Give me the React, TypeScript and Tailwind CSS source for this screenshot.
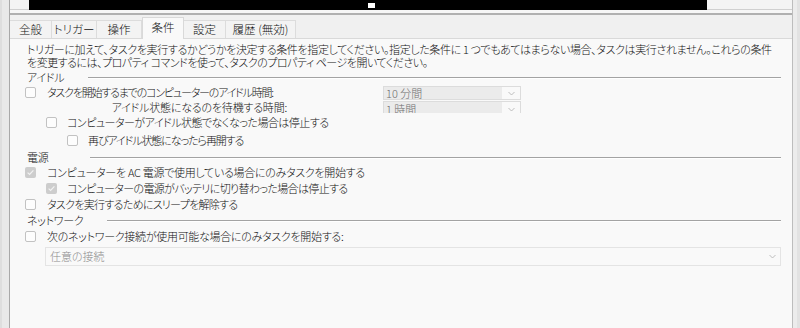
import React from "react";

function Box({ checked }: { checked?: boolean }) {
  if (checked) {
    return (
      <span className="w-[11px] h-[11px] rounded-[2px] bg-[#cdcdcd] flex items-center justify-center shrink-0">
        <svg width="9" height="9" viewBox="0 0 9 9">
          <path d="M1.6 4.6 L3.6 6.5 L7.4 2.4" stroke="#f2f2f2" strokeWidth="1.2" fill="none" />
        </svg>
      </span>
    );
  }
  return <span className="w-[11px] h-[11px] rounded-[2px] border border-[#c2c2c2] bg-[#fdfdfd] shrink-0" />;
}

function Heading({ label, w }: { label: string; w: string }) {
  return (
    <div className="flex items-center h-[16px] pl-[2px]">
      <span className={`${w} shrink-0`}>{label}</span>
      <div className="flex-1 mt-[2px] border-t border-[#a3a3a3] border-b border-b-white" />
    </div>
  );
}

function Chevron() {
  return (
    <svg width="7" height="5" viewBox="0 0 7 5">
      <path d="M0.5 1 L3.5 4 L6.5 1" stroke="#b5b5b5" strokeWidth="0.9" fill="none" />
    </svg>
  );
}

export default function App() {
  const tabs = [
    { t: "全般", w: "w-[42px]" },
    { t: "トリガー", w: "w-[45px]" },
    { t: "操作", w: "w-[45px]" },
    { t: "条件", w: "w-[42px]", sel: true },
    { t: "設定", w: "w-[42px]" },
    { t: "履歴 (無効)", w: "w-[70px]" },
  ];
  return (
    <div className="w-[800px] h-[328px] overflow-hidden bg-[#f0f0f0] flex text-[11px] font-light tracking-[-0.3px] text-[#111] font-['Noto_Sans_CJK_JP',sans-serif] [font-feature-settings:'palt']">
      <div className="w-[10px] shrink-0 bg-[#e9e9e9] border-l-[2px] border-l-[#dedede] border-r border-r-[#a9a9a9]" />
      <div className="flex-1 flex flex-col">
        <div className="h-[10px] flex shrink-0">
          <div className="w-[19px] bg-[#f4f4f4] border-b border-[#d0d0d0]" />
          <div className="flex-1 bg-black flex items-start">
            <div className="ml-[339px] mt-[3px] w-[7px] h-[5px] bg-white" />
          </div>
          <div className="w-[85px] bg-[#f4f4f4] border-b border-[#d0d0d0]" />
        </div>
        <div className="h-[5px] shrink-0 border-b-[2px] border-[#b0b0b0] bg-[#f6f6f6]" />
        <div className="h-[23px] shrink-0 flex items-end text-[11.5px] tracking-normal">
          {tabs.map((tab) =>
            tab.sel ? (
              <div
                key={tab.t}
                className={`${tab.w} h-[22px] bg-[#f9f9f9] border-x border-t border-[#d9d9d9] flex items-center justify-center pb-[2px] -mb-px relative z-10`}
              >
                {tab.t}
              </div>
            ) : (
              <div
                key={tab.t}
                className={`${tab.w} h-[18px] bg-[#f3f3f3] border-r border-t border-[#dcdcdc] flex items-center justify-center`}
              >
                {tab.t}
              </div>
            )
          )}
        </div>
        <div className="flex-1 bg-[#f9f9f9] border-t border-[#d9d9d9] pl-[15px] pr-[11px] pt-[4px] flex flex-col">
          <div className="leading-[13px] pl-[2px]">
            <div className="h-[13px] whitespace-nowrap tracking-[-0.37px]">
              トリガーに加えて、タスクを実行するかどうかを決定する条件を指定してください。指定した条件に 1 つでもあてはまらない場合、タスクは実行されません。これらの条件
            </div>
            <div className="h-[13px] whitespace-nowrap tracking-[-0.5px]">
              を変更するには、プロパティ コマンドを使って、タスクのプロパティ ページを開いてください。
            </div>
          </div>
          <Heading label="アイドル" w="w-[61px]" />
          <div className="h-[15px] flex items-center">
            <Box />
            <span className="ml-[11px] w-[240px] whitespace-nowrap tracking-[-1.2px]">タスクを開始するまでのコンピューターのアイドル時間:</span>
            <div className="ml-[96px] w-[138px] h-[14px] mt-[1px] border border-[#dcdcdc] flex items-center text-[#6e6e6e] tracking-normal">
              <div className="w-[118px] h-full bg-[#ebebeb] flex items-center pl-[2px] leading-none">10 分間</div>
              <div className="flex-1 flex justify-center">
                <Chevron />
              </div>
            </div>
          </div>
          <div className="h-[14px] flex items-start">
            <span className="w-[262px] text-right whitespace-nowrap leading-[14px] tracking-[-0.2px]">アイドル状態になるのを待機する時間:</span>
            <div className="ml-[96px] w-[138px] h-[12px] mt-[1px] border-x border-t border-[#dcdcdc] flex items-start overflow-hidden text-[#6e6e6e] tracking-normal">
              <div className="w-[118px] h-full bg-[#ebebeb] pl-[2px] leading-[14px]">1 時間</div>
              <div className="flex-1 flex justify-center pt-[5px]">
                <Chevron />
              </div>
            </div>
          </div>
          <div className="h-[17px] flex items-center pl-[21px]">
            <Box />
            <span className="ml-[10px] whitespace-nowrap tracking-[-0.52px]">コンピューターがアイドル状態でなくなった場合は停止する</span>
          </div>
          <div className="h-[18px] flex items-center pl-[42px]">
            <Box />
            <span className="ml-[10px] whitespace-nowrap tracking-[-1.1px]">再びアイドル状態になったら再開する</span>
          </div>
          <Heading label="電源" w="w-[63px]" />
          <div className="h-[15px] flex items-center">
            <Box checked />
            <span className="ml-[11px] whitespace-nowrap">コンピューターを AC 電源で使用している場合にのみタスクを開始する</span>
          </div>
          <div className="h-[16px] flex items-center pl-[21px]">
            <Box checked />
            <span className="ml-[10px] whitespace-nowrap tracking-[-0.65px]">コンピューターの電源がバッテリに切り替わった場合は停止する</span>
          </div>
          <div className="h-[16px] flex items-center">
            <Box />
            <span className="ml-[11px] whitespace-nowrap tracking-[-0.7px]">タスクを実行するためにスリープを解除する</span>
          </div>
          <Heading label="ネットワーク" w="w-[80px]" />
          <div className="h-[16px] flex items-center">
            <Box />
            <span className="ml-[11px] whitespace-nowrap">次のネットワーク接続が使用可能な場合にのみタスクを開始する:</span>
          </div>
          <div className="ml-[20px] mt-[3px] h-[19px] border border-[#e4e4e4] flex items-center text-[#8c8c8c] pl-[4px] pr-[4px] tracking-normal">
            <span className="flex-1">任意の接続</span>
            <Chevron />
          </div>
        </div>
      </div>
      <div className="w-[8px] shrink-0 bg-[#ececec] border-l border-l-[#bdbdbd] border-r-[3px] border-r-[#e2e2e2]" />
    </div>
  );
}
